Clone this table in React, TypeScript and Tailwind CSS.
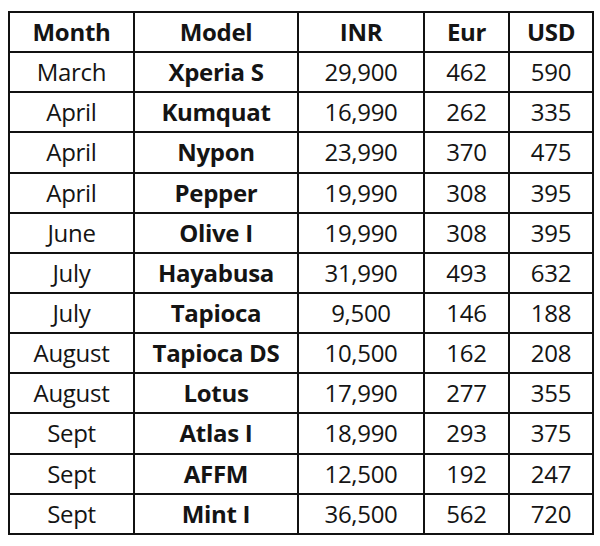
const rows: [string, string, string, string, string][] = [
  ["March", "Xperia S", "29,900", "462", "590"],
  ["April", "Kumquat", "16,990", "262", "335"],
  ["April", "Nypon", "23,990", "370", "475"],
  ["April", "Pepper", "19,990", "308", "395"],
  ["June", "Olive I", "19,990", "308", "395"],
  ["July", "Hayabusa", "31,990", "493", "632"],
  ["July", "Tapioca", "9,500", "146", "188"],
  ["August", "Tapioca DS", "10,500", "162", "208"],
  ["August", "Lotus", "17,990", "277", "355"],
  ["Sept", "Atlas I", "18,990", "293", "375"],
  ["Sept", "AFFM", "12,500", "192", "247"],
  ["Sept", "Mint I", "36,500", "562", "720"],
];

const cell = "border-2 border-[#111] h-[40.15px] p-0 text-center align-middle";

export default function App() {
  return (
    <div className="w-[600px] h-[546px] bg-white pt-[11px] pl-[8px] text-[#141414] font-['Open_Sans',sans-serif]">
      <table className="table-fixed border-collapse w-[584px] text-[24px] leading-none tracking-[-0.3px]">
        <colgroup>
          <col className="w-[125px]" />
          <col className="w-[164px]" />
          <col className="w-[126px]" />
          <col className="w-[85px]" />
          <col className="w-[84px]" />
        </colgroup>
        <thead>
          <tr className="font-bold">
            <th className={cell}>Month</th>
            <th className={cell}>Model</th>
            <th className={cell}>INR</th>
            <th className={cell}>Eur</th>
            <th className={cell}>USD</th>
          </tr>
        </thead>
        <tbody>
          {rows.map((r, i) => (
            <tr key={i}>
              <td className={cell}>{r[0]}</td>
              <td className={cell + " font-bold"}>{r[1]}</td>
              <td className={cell}>{r[2]}</td>
              <td className={cell}>{r[3]}</td>
              <td className={cell}>{r[4]}</td>
            </tr>
          ))}
        </tbody>
      </table>
    </div>
  );
}
